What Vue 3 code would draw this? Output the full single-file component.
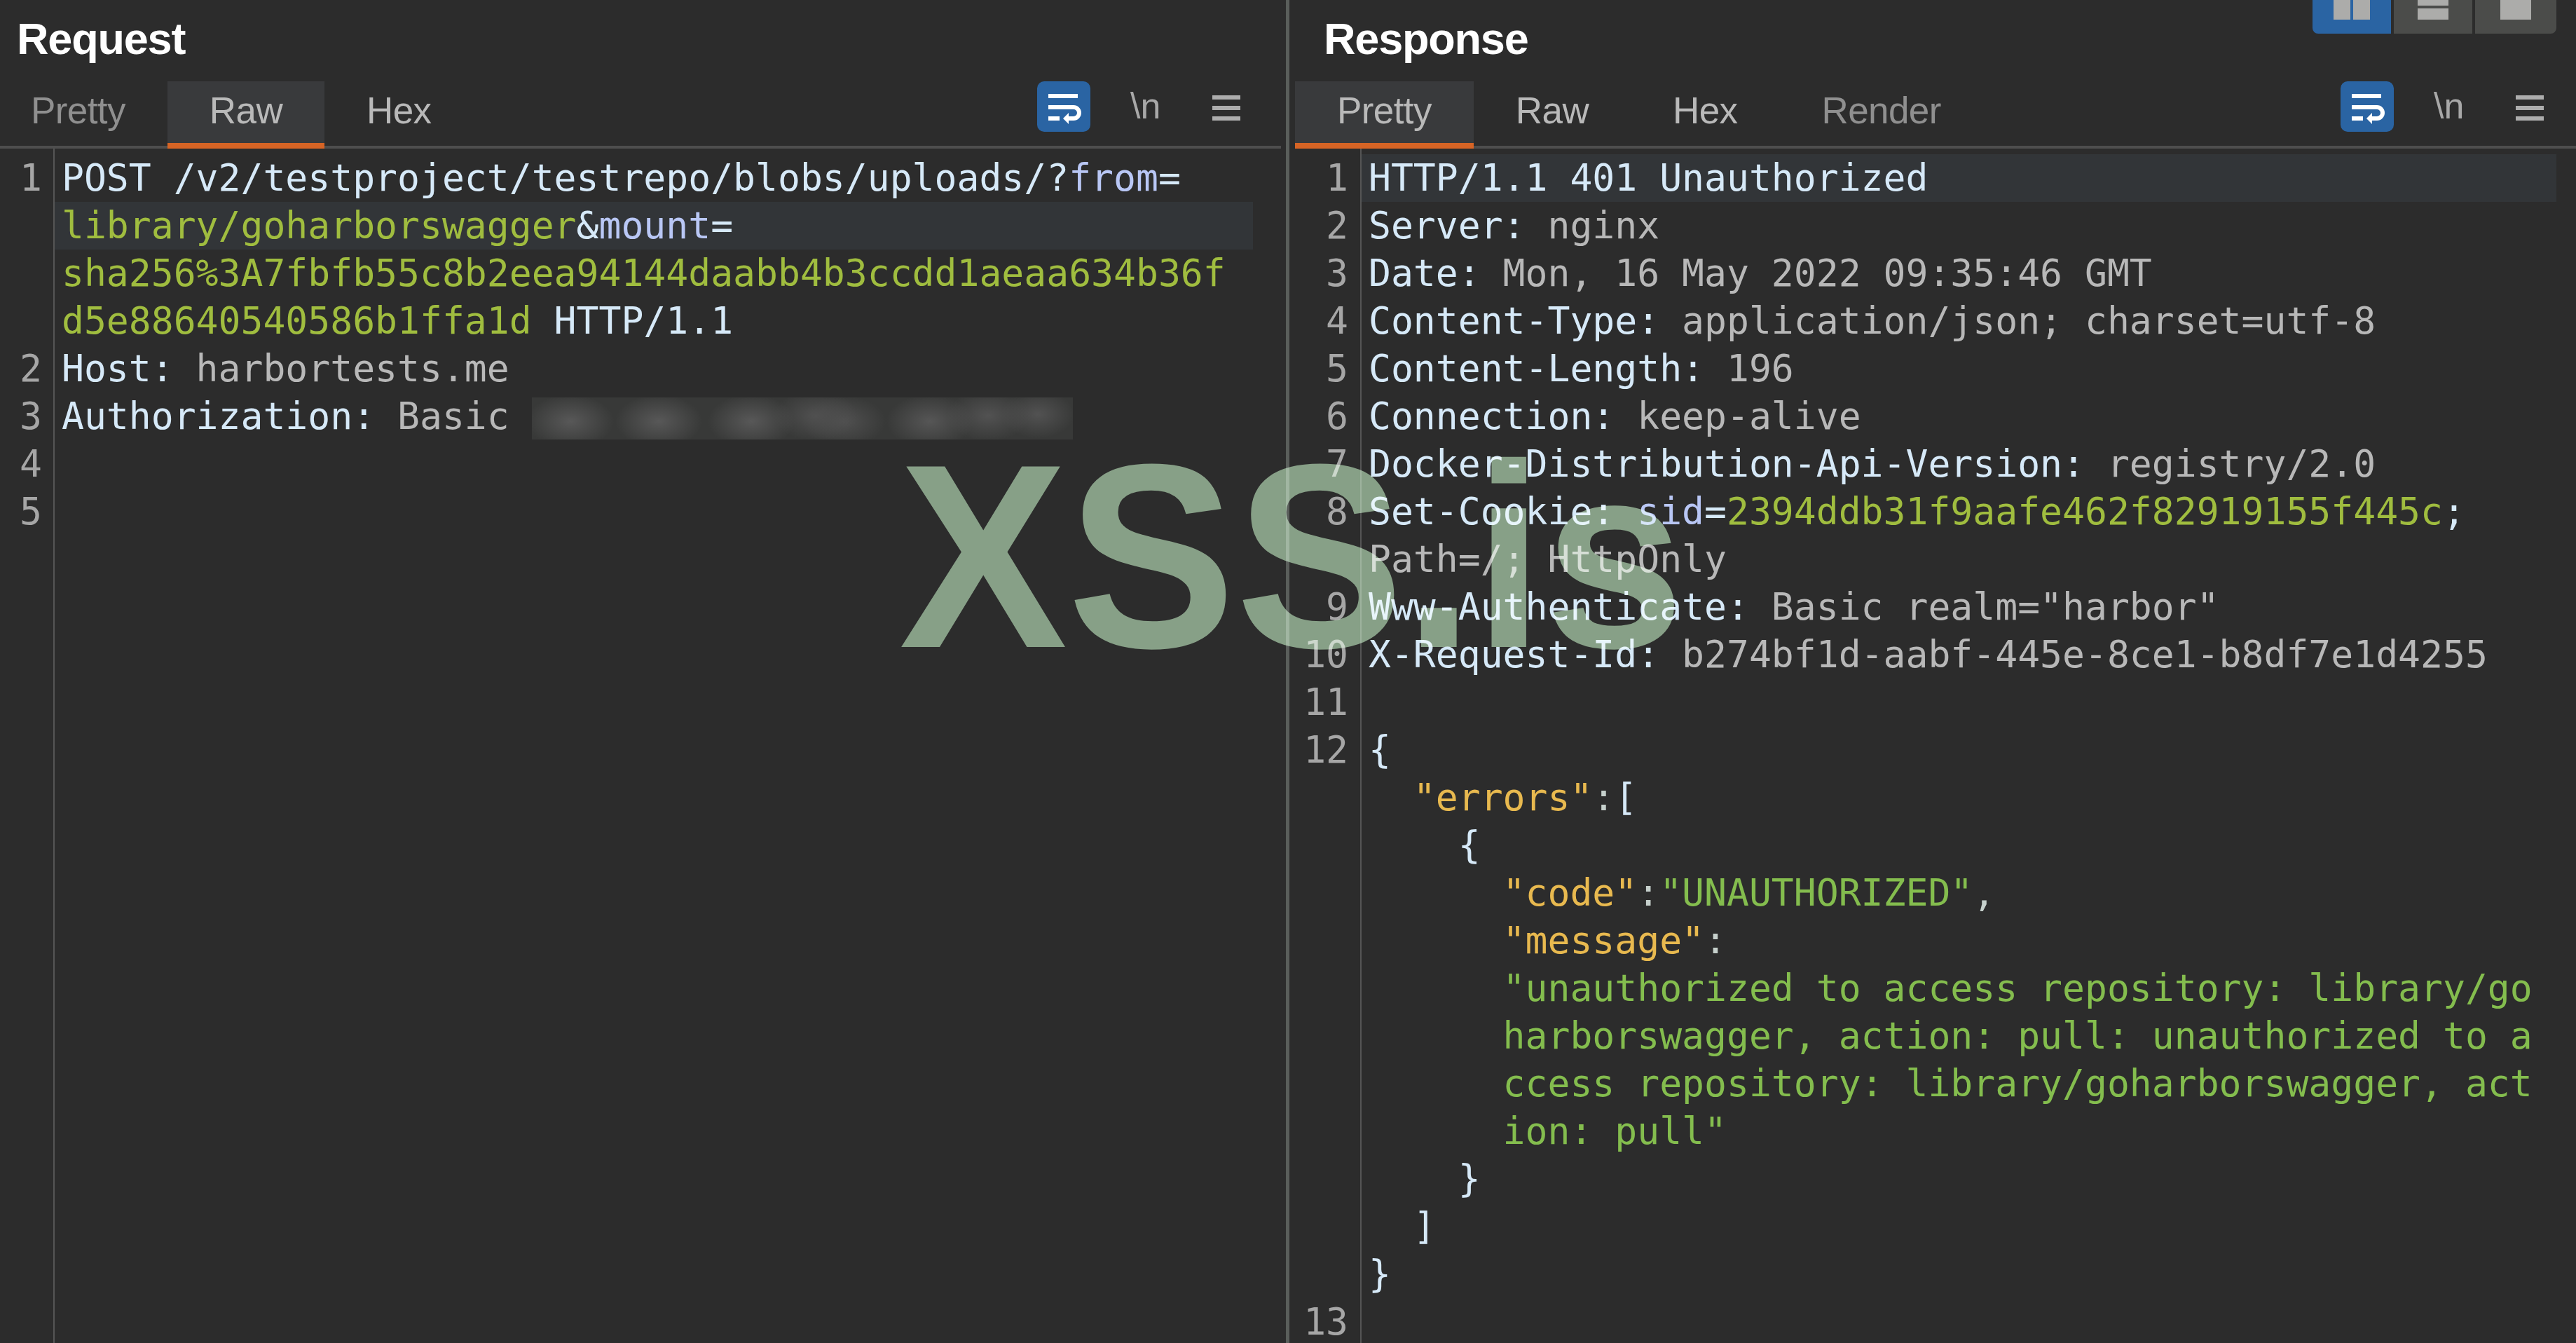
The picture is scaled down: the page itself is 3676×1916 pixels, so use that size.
<script setup>
const k = 'k', v = 'v', p = 'p', g = 'g', s = 's', y = 'y', c = 'c'

const requestLines = [
  { n: 1, segs: [[k, 'POST /v2/testproject/testrepo/blobs/uploads/?'], [p, 'from'], [k, '=']] },
  { segs: [[g, 'library/goharborswagger'], [k, '&'], [p, 'mount'], [k, '=']], hl: true },
  { segs: [[g, 'sha256%3A7fbfb55c8b2eea94144daabb4b3ccdd1aeaa634b36f']] },
  { segs: [[g, 'd5e88640540586b1ffa1d'], [k, ' HTTP/1.1']] },
  { n: 2, segs: [[k, 'Host:'], [v, ' harbortests.me']] },
  { n: 3, segs: [[k, 'Authorization:'], [v, ' Basic ']], blur: true },
  { n: 4, segs: [] },
  { n: 5, segs: [] }
]

const responseLines = [
  { n: 1, segs: [[k, 'HTTP/1.1 401 Unauthorized']], hl: true },
  { n: 2, segs: [[k, 'Server:'], [v, ' nginx']] },
  { n: 3, segs: [[k, 'Date:'], [v, ' Mon, 16 May 2022 09:35:46 GMT']] },
  { n: 4, segs: [[k, 'Content-Type:'], [v, ' application/json; charset=utf-8']] },
  { n: 5, segs: [[k, 'Content-Length:'], [v, ' 196']] },
  { n: 6, segs: [[k, 'Connection:'], [v, ' keep-alive']] },
  { n: 7, segs: [[k, 'Docker-Distribution-Api-Version:'], [v, ' registry/2.0']] },
  { n: 8, segs: [[k, 'Set-Cookie:'], [p, ' sid'], [k, '='], [g, '2394ddb31f9aafe462f82919155f445c'], [k, ';']] },
  { segs: [[v, 'Path=/; HttpOnly']] },
  { n: 9, segs: [[k, 'Www-Authenticate:'], [v, ' Basic realm="harbor"']] },
  { n: 10, segs: [[k, 'X-Request-Id:'], [v, ' b274bf1d-aabf-445e-8ce1-b8df7e1d4255']] },
  { n: 11, segs: [] },
  { n: 12, segs: [[k, '{']] },
  { segs: [[y, '  "errors"'], [c, ':'], [k, '[']] },
  { segs: [[k, '    {']] },
  { segs: [[y, '      "code"'], [c, ':'], [s, '"UNAUTHORIZED"'], [c, ',']] },
  { segs: [[y, '      "message"'], [c, ':']] },
  { segs: [[s, '      "unauthorized to access repository: library/go']] },
  { segs: [[s, '      harborswagger, action: pull: unauthorized to a']] },
  { segs: [[s, '      ccess repository: library/goharborswagger, act']] },
  { segs: [[s, '      ion: pull"']] },
  { segs: [[k, '    }']] },
  { segs: [[k, '  ]']] },
  { segs: [[k, '}']] },
  { n: 13, segs: [] }
]

const panes = [
  { id: 'req', title: 'Request', tabs: ['Pretty', 'Raw', 'Hex'], active: 'Raw', lines: requestLines },
  { id: 'res', title: 'Response', tabs: ['Pretty', 'Raw', 'Hex', 'Render'], active: 'Pretty', lines: responseLines }
]
</script>

<template>
  <div class="app">
    <section v-for="pane in panes" :key="pane.id" class="pane" :class="pane.id">
      <header class="head">
        <h2 class="title">{{ pane.title }}</h2>
        <div v-if="pane.id === 'res'" class="layouts">
          <div class="lay on"><i class="cell"></i><i class="cell"></i></div>
          <div class="lay stack"><i class="bar short"></i><i class="bar tall"></i></div>
          <div class="lay last"><i class="cell wide"></i></div>
        </div>
      </header>

      <div class="tabrow">
        <div class="tabs">
          <div v-for="t in pane.tabs" :key="t" class="tab" :class="{ active: t === pane.active, dim: t === 'Pretty' || t === 'Render' }">{{ t }}</div>
        </div>
        <div class="tools">
          <button class="wrap" type="button">
            <svg viewBox="0 0 76 72" width="76" height="72">
              <path d="M16 21H58M16 37H52A8 8 0 0 1 52 53H42M16 53H32" fill="none" stroke="#fff" stroke-width="6" />
              <path d="M37 53L45 45V61Z" fill="#fff" />
            </svg>
          </button>
          <span class="nl">\n</span>
          <svg class="burger" viewBox="0 0 40 36" width="40" height="36">
            <path d="M0 3H40M0 18H40M0 33H40" stroke="#adadad" stroke-width="6" />
          </svg>
        </div>
      </div>

      <div class="code">
        <div class="gutter">
          <div v-for="(line, i) in pane.lines" :key="i" class="num">{{ line.n }}</div>
        </div>
        <div class="lines">
          <div v-for="(line, i) in pane.lines" :key="i" class="line" :class="{ hl: line.hl }"><span v-for="(seg, j) in line.segs" :key="j" :class="seg[0]">{{ seg[1] }}</span><span v-if="line.blur" class="blur"></span></div>
        </div>
      </div>
    </section>
    <div class="mark">XSS.is</div>
  </div>
</template>

<style scoped>
.app {
  position: relative;
  width: 3676px;
  height: 1916px;
  overflow: hidden;
  display: grid;
  grid-template-columns: 1835px 1841px;
  background: #2c2c2c;
  font-family: "Liberation Sans", Arial, sans-serif;
}
.pane {
  display: flex;
  flex-direction: column;
  min-width: 0;
  height: 1916px;
}
.res { border-left: 5px solid #5a5e5b; }

.head {
  height: 116px;
  display: flex;
  justify-content: space-between;
  align-items: flex-start;
  flex: none;
}
.title {
  margin: 20px 0 0;
  font-size: 63px;
  line-height: 70px;
  font-weight: 700;
  color: #fff;
  letter-spacing: -1.2px;
}
.req .title { padding-left: 24px; }
.res .title { padding-left: 49px; }

.layouts {
  display: flex;
  gap: 4px;
  margin-right: 28px;
}
.lay {
  height: 48px;
  width: 112px;
  background: #4b4c4a;
  display: flex;
  justify-content: center;
  align-items: flex-start;
  gap: 4px;
}
.lay.on { background: #2a64a3; border-bottom-left-radius: 8px; }
.lay.last { width: 116px; border-bottom-right-radius: 8px; }
.lay.stack { flex-direction: column; align-items: center; justify-content: flex-start; }
.cell { display: block; width: 24px; height: 28px; background: #acacaa; }
.cell.wide { width: 44px; }
.bar { display: block; width: 44px; background: #acacaa; }
.bar.short { height: 8px; }
.bar.tall { height: 16px; }

.tabrow {
  height: 96px;
  flex: none;
  display: flex;
  justify-content: space-between;
  border-bottom: 4px solid #4e4e4e;
  box-sizing: border-box;
}
.req .tabrow { margin-right: 7px; }
.res .tabrow { margin-left: 8px; }

.tabs { display: flex; }
.req .tabs { margin-left: -16px; }
.tab {
  height: 96px;
  box-sizing: border-box;
  padding: 0 60px;
  font-size: 53px;
  letter-spacing: -0.6px;
  line-height: 84px;
  color: #b9b9b9;
}
.tab.dim { color: #8f8f8f; }
.tab.active {
  background: #393a3c;
  color: #b9b9b9;
  border-bottom: 8px solid #d66425;
}

.tools {
  display: flex;
  align-items: flex-start;
  height: 72px;
}
.req .tools { padding-right: 58px; }
.res .tools { padding-right: 46px; }
.wrap {
  width: 76px;
  height: 72px;
  padding: 0;
  border: 0;
  border-radius: 10px;
  background: #2a64a3;
  display: block;
}
.wrap svg { display: block; }
.nl {
  margin-left: 57px;
  width: 42px;
  font-size: 52px;
  line-height: 70px;
  color: #a8a8a8;
}
.burger {
  margin-left: 75px;
  margin-top: 20px;
  display: block;
}

.code {
  flex: 1;
  min-height: 0;
  display: flex;
  overflow: hidden;
  font-family: "DejaVu Sans Mono", "Liberation Mono", monospace;
  font-size: 53.05px;
  line-height: 68px;
}
.gutter {
  flex: none;
  box-sizing: border-box;
  padding-top: 8px;
  border-right: 2px solid #555;
}
.req .gutter { width: 78px; padding-right: 16px; }
.res .gutter { width: 103px; padding-right: 17px; }
.num {
  height: 68px;
  text-align: right;
  color: #a6a6a6;
}
.lines {
  flex: 1;
  min-width: 0;
  padding-top: 8px;
}
.line {
  height: 68px;
  white-space: pre;
  padding-left: 10px;
}
.req .lines { margin-right: 47px; }
.res .lines { margin-right: 28px; }
.line.hl { background: #323538; }

.k { color: #d6e9f8; }
.v { color: #b8b8b8; }
.p { color: #b9c7f5; }
.g { color: #a0bd3f; }
.s { color: #84bd4e; }
.y { color: #e8b94f; }
.c { color: #c6d0cc; }

.blur {
  display: inline-block;
  width: 772px;
  height: 60px;
  vertical-align: middle;
  background:
    radial-gradient(ellipse 62px 38px at 55px 34px, #585858 0%, transparent 100%),
    radial-gradient(ellipse 62px 38px at 181px 34px, #585858 0%, transparent 100%),
    radial-gradient(ellipse 62px 38px at 313px 34px, #585858 0%, transparent 100%),
    radial-gradient(ellipse 60px 36px at 405px 26px, #505050 0%, transparent 100%),
    radial-gradient(ellipse 60px 36px at 445px 34px, #505050 0%, transparent 100%),
    radial-gradient(ellipse 62px 38px at 568px 34px, #565656 0%, transparent 100%),
    radial-gradient(ellipse 60px 36px at 651px 26px, #525252 0%, transparent 100%),
    radial-gradient(ellipse 52px 34px at 722px 24px, #525252 0%, transparent 100%),
    #383938;
}

.mark {
  position: absolute;
  left: 1283px;
  top: 613px;
  font-size: 360px;
  line-height: 360px;
  font-weight: 700;
  color: #6e8c6e;
  white-space: nowrap;
  mix-blend-mode: screen;
  transform: scaleY(1.04);
  pointer-events: none;
}
</style>
